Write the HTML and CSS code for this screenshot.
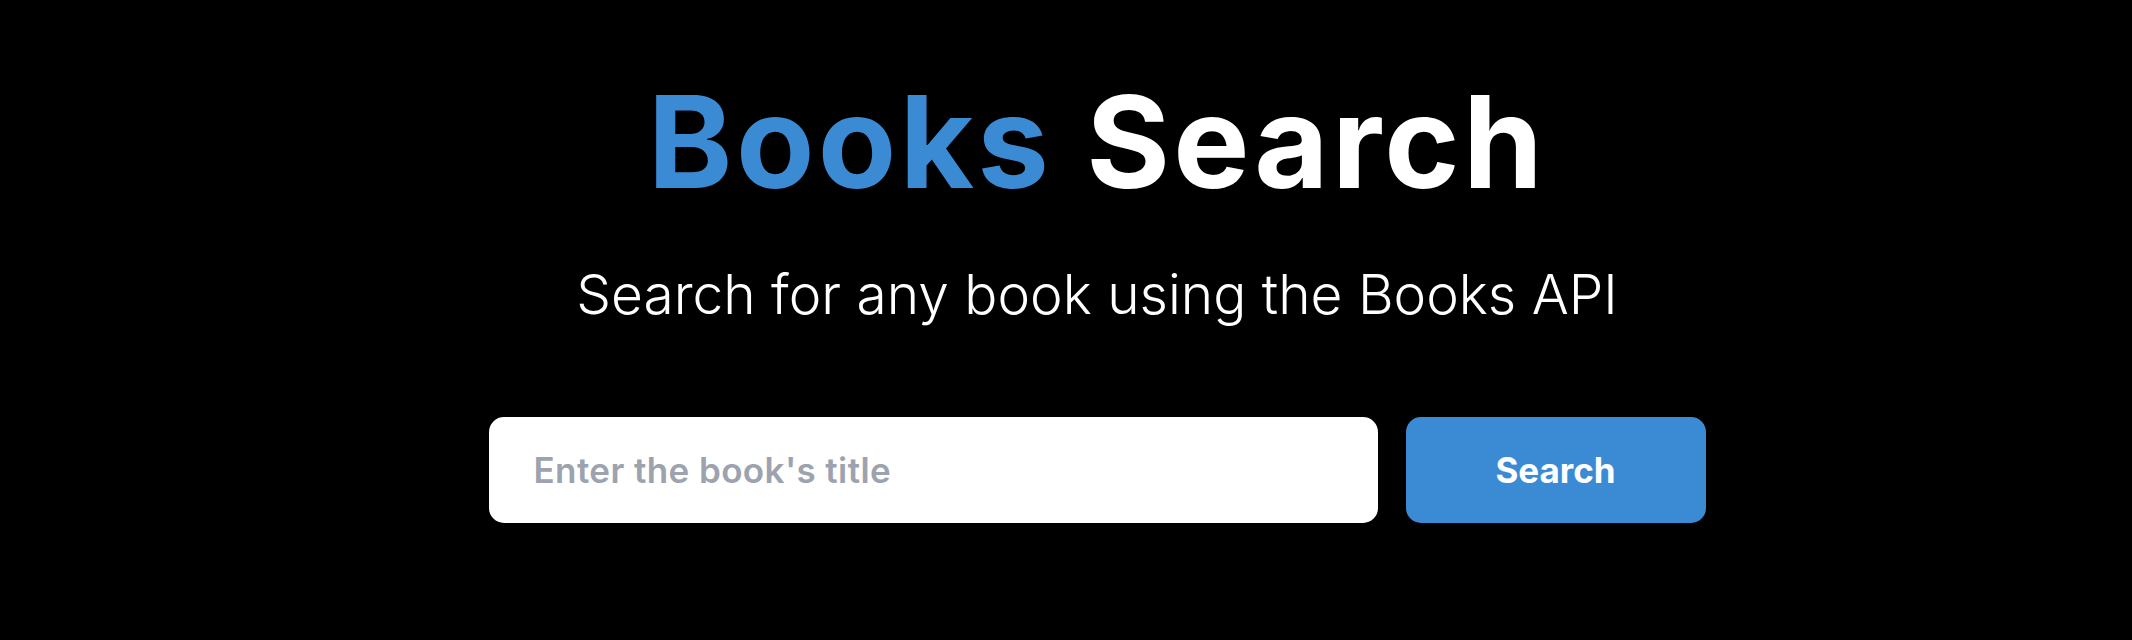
FILE: index.html
```html
<!DOCTYPE html>
<html lang="en">
  <head>
    <meta charset="UTF-8">
    <title>Books Search</title>
    <meta name="viewport" content="width=device-width, initial-scale=1.0">
    <link rel="stylesheet" href="styles.css">
  </head>
  <body>
    <main class="hero">
      <h1 class="title"><span class="accent">Books</span> Search</h1>
      <p class="subtitle">Search for any book using the Books API</p>

      <form class="search-form" onsubmit="return false">
        <input type="text" class="search-input" placeholder="Enter the book's title">
        <button type="submit" class="search-btn">Search</button>
      </form>
    </main>
  </body>
</html>
```

FILE: styles.css
```css
* { box-sizing: border-box; }

body {
  margin: 0;
  background: #000;
  color: #fff;
  font-family: Inter, "Noto Sans", sans-serif;
  min-height: 100vh;
}

.hero {
  display: flex;
  flex-direction: column;
  align-items: center;
  padding: 78px 0 0 62px;
}

.title {
  font-size: 128px;
  font-weight: 700;
  line-height: 1;
  letter-spacing: 3.4px;
  margin: 0;
}

.accent {
  color: #3b8bd4;
}

.subtitle {
  font-size: 55px;
  font-weight: 300;
  margin: 61px 0 0;
  line-height: 1;
}

.search-form {
  display: flex;
  gap: 28px;
  margin-top: 95px;
}

.search-input {
  width: 889px;
  height: 106px;
  border: none;
  border-radius: 15px;
  padding: 0 45px;
  font-family: inherit;
  font-size: 35px;
  font-weight: 600;
  letter-spacing: 0.4px;
  color: #111;
  outline: none;
}

.search-input::placeholder {
  color: #9ca3af;
}

.search-btn {
  width: 300px;
  height: 106px;
  border: none;
  border-radius: 15px;
  background: #3b8bd4;
  color: #fff;
  font-family: inherit;
  font-size: 35px;
  font-weight: 700;
  cursor: pointer;
}
```
